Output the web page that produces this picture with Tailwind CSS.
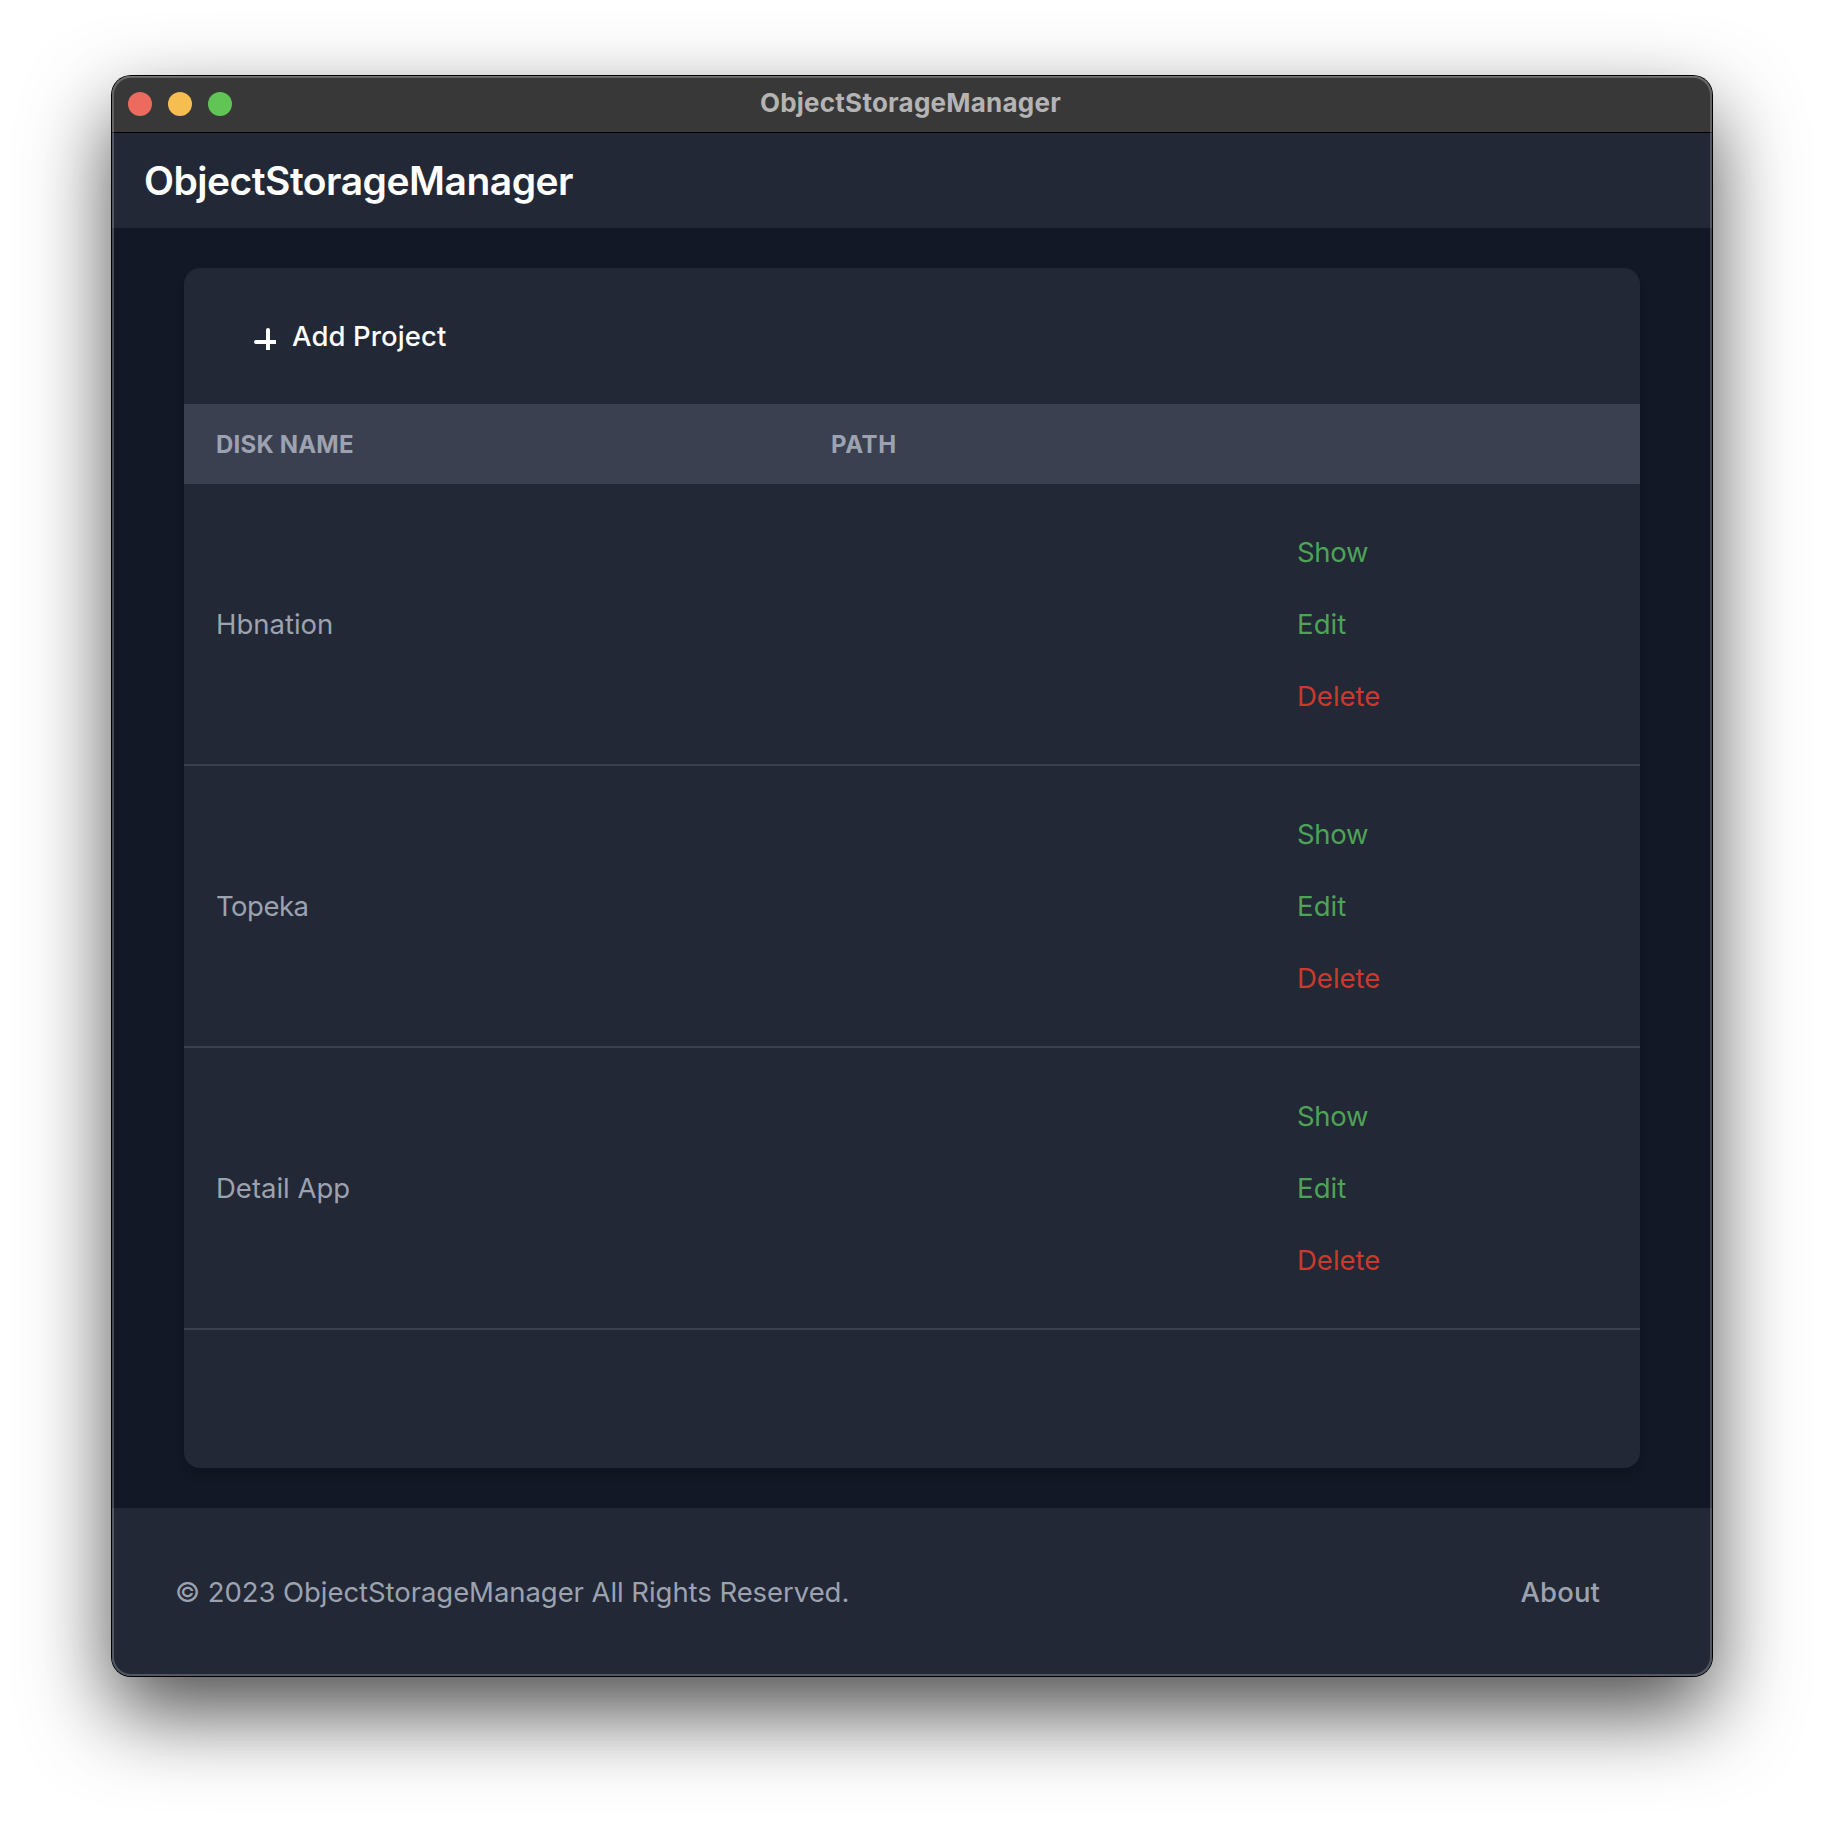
<!DOCTYPE html>
<html lang="en">
<head>
<meta charset="utf-8">
<title>ObjectStorageManager</title>
<script src="https://cdn.jsdelivr.net/npm/@tailwindcss/browser@4"></script>
</head>
<body class="bg-white font-['Inter',sans-serif] text-[27.5px] text-[#9ca2b0]">
<div class="w-[1824px] h-[1824px] overflow-hidden px-[112px] pt-[76px]">
  <div class="relative flex h-[1600px] w-[1600px] flex-col rounded-[19px] shadow-[0_0_0_1px_#000,0_36px_84px_rgba(0,0,0,0.7)]">
    <div class="flex h-full flex-col overflow-hidden rounded-[19px] bg-[#121825]">

      <!-- Title bar -->
      <div class="grid h-[57px] shrink-0 grid-cols-[1fr_auto_1fr] items-center border-b border-black bg-[#383838] px-4">
        <div class="flex gap-4">
          <span class="size-6 rounded-full bg-[#ed6a5f]"></span>
          <span class="size-6 rounded-full bg-[#f6be50]"></span>
          <span class="size-6 rounded-full bg-[#61c555]"></span>
        </div>
        <div class="pr-[3px] pb-[3px] text-[26px] font-bold leading-8 tracking-[0.24px] text-[#b4b4b4]">ObjectStorageManager</div>
      </div>

      <!-- Header -->
      <header class="flex h-[95px] shrink-0 items-center bg-[#222835] pl-8">
        <h1 class="text-[39px] font-semibold leading-[56px] tracking-[-0.5px] text-white">ObjectStorageManager</h1>
      </header>

      <main class="px-[72px] py-10">
        <div class="flex h-[1200px] flex-col rounded-2xl bg-[#222835] shadow-[0_8px_12px_-2px_rgba(0,0,0,0.1),0_4px_8px_-4px_rgba(0,0,0,0.15)]">
          <div class="flex h-[136px] shrink-0 items-center pl-[70px]">
            <button class="flex items-center gap-4 font-medium leading-10 text-white">
              <svg class="mt-[6px] size-[22px]" viewBox="0 0 22 22" fill="currentColor"><path d="M12 2a2 2 0 0 1 4 0v10h6v4h-6v6h-4v-6H2a2 2 0 0 1 0-4h10z"/></svg>
              <span class="tracking-[0.1px]">Add Project</span>
            </button>
          </div>

          <div class="grid h-20 shrink-0 grid-cols-[615px_466px_1fr] items-center bg-[#3b4050] pl-8 pt-0.5 text-[24px] font-bold leading-8">
            <div class="tracking-[0.2px]">DISK NAME</div>
            <div class="tracking-[0.6px]">PATH</div>
            <div></div>
          </div>

          <div class="grid h-[282px] shrink-0 grid-cols-[615px_466px_1fr] items-center border-b-2 border-[#3b4050] pl-8">
            <div class="leading-[72px]">Hbnation</div>
            <div></div>
            <div class="flex flex-col leading-[72px] text-[#4da356]">
              <a class="tracking-[-0.3px]">Show</a>
              <a class="tracking-[0.1px]">Edit</a>
              <a class="text-[#cb392e]">Delete</a>
            </div>
          </div>
          <div class="grid h-[282px] shrink-0 grid-cols-[615px_466px_1fr] items-center border-b-2 border-[#3b4050] pl-8">
            <div class="leading-[72px] tracking-[-0.5px]">Topeka</div>
            <div></div>
            <div class="flex flex-col leading-[72px] text-[#4da356]">
              <a class="tracking-[-0.3px]">Show</a>
              <a class="tracking-[0.1px]">Edit</a>
              <a class="text-[#cb392e]">Delete</a>
            </div>
          </div>
          <div class="grid h-[282px] shrink-0 grid-cols-[615px_466px_1fr] items-center border-b-2 border-[#3b4050] pl-8">
            <div class="leading-[72px]">Detail App</div>
            <div></div>
            <div class="flex flex-col leading-[72px] text-[#4da356]">
              <a class="tracking-[-0.3px]">Show</a>
              <a class="tracking-[0.1px]">Edit</a>
              <a class="text-[#cb392e]">Delete</a>
            </div>
          </div>
        </div>
      </main>

      <!-- Footer -->
      <footer class="flex flex-1 items-center justify-between bg-[#222835] pr-[112px] pl-[63px] leading-10">
        <span class="tracking-[-0.06px]">© 2023 ObjectStorageManager All Rights Reserved.</span>
        <a class="font-medium tracking-[0.1px]">About</a>
      </footer>
    </div>
    <!-- Inner highlight of the window edge -->
    <div class="pointer-events-none absolute inset-0 rounded-[19px] shadow-[inset_0_0_0_2px_rgba(255,255,255,0.22),inset_0_1px_0_0_rgba(255,255,255,0.12)]"></div>
  </div>
</div>
</body>
</html>
